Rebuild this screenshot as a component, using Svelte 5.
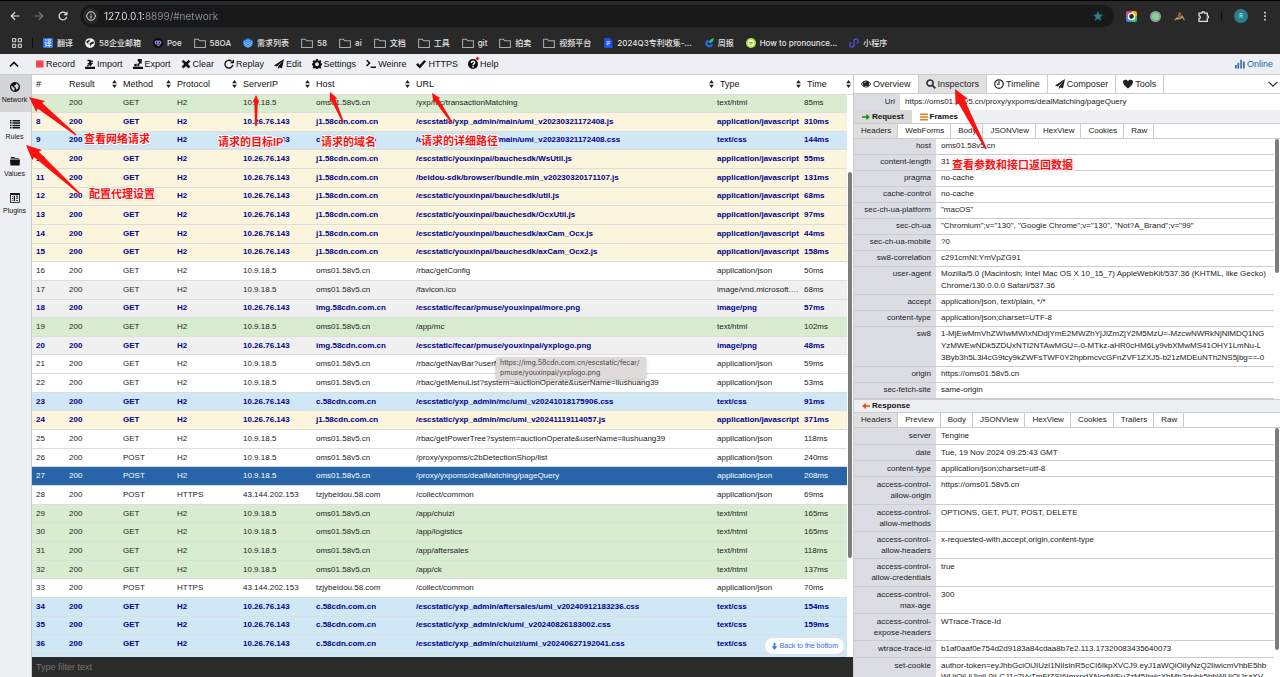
<script lang="ts">
  type Row = {
    id: number;
    method: string;
    protocol: string;
    ip: string;
    host: string;
    url: string;
    type: string;
    time: string;
  };

  const SHORT_TYPES: Record<string, string> = {
    html: "text/html",
    js: "application/javascript",
    css: "text/css",
    json: "application/json",
    png: "image/png",
    ico: "image/vnd.microsoft.icon",
  };

  const CDN = "10.26.76.143";
  const OMS = "10.9.18.5";

  // id | host | url | type | ms, the rest is derived from the host
  const source = `7|oms01.58v5.cn|/yxp/mc/transactionMatching|html|85
8|j1.58cdn.com.cn|/escstatic/yxp_admin/main/umi_v20230321172408.js|js|310
9|c.58cdn.com.cn|/escstatic/yxp_admin/main/umi_v20230321172408.css|css|144
10|j1.58cdn.com.cn|/escstatic/youxinpai/bauchesdk/WsUtil.js|js|55
11|j1.58cdn.com.cn|/beidou-sdk/browser/bundle.min_v20230320171107.js|js|131
12|j1.58cdn.com.cn|/escstatic/youxinpai/bauchesdk/util.js|js|68
13|j1.58cdn.com.cn|/escstatic/youxinpai/bauchesdk/OcxUtil.js|js|97
14|j1.58cdn.com.cn|/escstatic/youxinpai/bauchesdk/axCam_Ocx.js|js|44
15|j1.58cdn.com.cn|/escstatic/youxinpai/bauchesdk/axCam_Ocx2.js|js|158
16|oms01.58v5.cn|/rbac/getConfig|json|50
17|oms01.58v5.cn|/favicon.ico|ico|68
18|img.58cdn.com.cn|/escstatic/fecar/pmuse/youxinpai/more.png|png|57
19|oms01.58v5.cn|/app/mc|html|102
20|img.58cdn.com.cn|/escstatic/fecar/pmuse/youxinpai/yxplogo.png|png|48
21|oms01.58v5.cn|/rbac/getNavBar?userName=liushuang39|json|59
22|oms01.58v5.cn|/rbac/getMenuList?system=auctionOperate&userName=liushuang39|json|53
23|c.58cdn.com.cn|/escstatic/yxp_admin/mc/umi_v20241018175906.css|css|91
24|j1.58cdn.com.cn|/escstatic/yxp_admin/mc/umi_v20241119114057.js|js|371
25|oms01.58v5.cn|/rbac/getPowerTree?system=auctionOperate&userName=liushuang39|json|118
26|oms01.58v5.cn|/proxy/yxpoms/c2bDetectionShop/list|json|240
27|oms01.58v5.cn|/proxy/yxpoms/dealMatching/pageQuery|json|208
28|tzjybeidou.58.com|/collect/common|json|69
29|oms01.58v5.cn|/app/chuizi|html|165
30|oms01.58v5.cn|/app/logistics|html|165
31|oms01.58v5.cn|/app/aftersales|html|118
32|oms01.58v5.cn|/app/ck|html|137
33|tzjybeidou.58.com|/collect/common|json|70
34|c.58cdn.com.cn|/escstatic/yxp_admin/aftersales/umi_v20240912183236.css|css|154
35|c.58cdn.com.cn|/escstatic/yxp_admin/ck/umi_v20240826183002.css|css|159
36|c.58cdn.com.cn|/escstatic/yxp_admin/chuizi/umi_v20240627192041.css|css|129`;

  const rows = source.split("\n").map((line) => {
    const [id, host, url, kind, ms] = line.split("|");
    const beidou = host.startsWith("tzjy");
    const post = beidou || url.startsWith("/proxy");
    return {
      id: Number(id),
      kind,
      cached: host.includes("58cdn"),
      method: post ? "POST" : "GET",
      protocol: beidou ? "HTTPS" : "H2",
      ip: beidou ? "43.144.202.153" : host.includes("58cdn") ? CDN : OMS,
      host,
      url,
      type: SHORT_TYPES[kind],
      time: `${ms}ms`,
    } satisfies Row & { kind: string; cached: boolean };
  });

  let selected = $state(27);
  let filter = $state("");
  let address = $state("127.0.0.1:8899/#network");

  const columns = ["#", "Result", "Method", "Protocol", "ServerIP", "Host", "URL", "Type", "Time"];

  const actions = [
    ["record", "Record"],
    ["import", "Import"],
    ["export", "Export"],
    ["remove", "Clear"],
    ["repeat", "Replay"],
    ["send", "Edit"],
    ["cog", "Settings"],
    ["console", "Weinre"],
    ["ok", "HTTPS"],
    ["question", "Help"],
  ];

  const menu = [
    ["globe", "Network"],
    ["list", "Rules"],
    ["folder", "Values"],
    ["plugins", "Plugins"],
  ];

  const panes = [
    ["eye", "Overview"],
    ["search", "Inspectors"],
    ["time", "Timeline"],
    ["send", "Composer"],
    ["heart", "Tools"],
  ];

  const bookmarks = [
    ["translate", "翻译"],
    ["site", "58企业邮箱"],
    ["poe", "Poe"],
    ["dir", "58OA"],
    ["stack", "需求列表"],
    ["dir", "58"],
    ["dir", "ai"],
    ["dir", "文档"],
    ["dir", "工具"],
    ["dir", "git"],
    ["dir", "拍卖"],
    ["dir", "视频平台"],
    ["doc", "2024Q3专利收集-..."],
    ["weekly", "周报"],
    ["pron", "How to pronounce..."],
    ["mini", "小程序"],
  ];

  const requestTabs = ["Headers", "WebForms", "Body", "JSONView", "HexView", "Cookies", "Raw"];
  const responseTabs = ["Headers", "Preview", "Body", "JSONView", "HexView", "Cookies", "Trailers", "Raw"];

  const requestHeaders = [
    ["host", "oms01.58v5.cn"],
    ["content-length", "31"],
    ["pragma", "no-cache"],
    ["cache-control", "no-cache"],
    ["sec-ch-ua-platform", '"macOS"'],
    ["sec-ch-ua", '"Chromium";v="130", "Google Chrome";v="130", "Not?A_Brand";v="99"'],
    ["sec-ch-ua-mobile", "?0"],
    ["sw8-correlation", "c291cmNl:YmVpZG91"],
    [
      "user-agent",
      "Mozilla/5.0 (Macintosh; Intel Mac OS X 10_15_7) AppleWebKit/537.36 (KHTML, like Gecko)\nChrome/130.0.0.0 Safari/537.36",
    ],
    ["accept", "application/json, text/plain, */*"],
    ["content-type", "application/json;charset=UTF-8"],
    [
      "sw8",
      "1-MjEwMmVhZWIwMWIxNDdjYmE2MWZhYjJlZmZjY2M5MzU=-MzcwNWRkNjNlMDQ1NG\nYzMWEwNDk5ZDUxNTI2NTAwMGU=-0-MTkz-aHR0cHM6Ly9vbXMwMS41OHY1LmNu-L\n3Byb3h5L3l4cG9tcy9kZWFsTWF0Y2hpbmcvcGFnZVF1ZXJ5-b21zMDEuNTh2NS5jbg==-0",
    ],
    ["origin", "https://oms01.58v5.cn"],
    ["sec-fetch-site", "same-origin"],
  ];

  const responseHeaders = [
    ["server", "Tengine"],
    ["date", "Tue, 19 Nov 2024 09:25:43 GMT"],
    ["content-type", "application/json;charset=utf-8"],
    ["access-control-\nallow-origin", "https://oms01.58v5.cn"],
    ["access-control-\nallow-methods", "OPTIONS, GET, PUT, POST, DELETE"],
    ["access-control-\nallow-headers", "x-requested-with,accept,origin,content-type"],
    ["access-control-\nallow-credentials", "true"],
    ["access-control-\nmax-age", "300"],
    ["access-control-\nexpose-headers", "WTrace-Trace-Id"],
    ["wtrace-trace-id", "b1af0aaf0e754d2d9183a84cdaa8b7e2.113.17320083435640073"],
    [
      "set-cookie",
      "author-token=eyJhbGciOiJIUzI1NiIsInR5cCI6IkpXVCJ9.eyJ1aWQiOiIyNzQ2IiwicmVhbE5hb\nWUiOiLliJjniL0iLCJ1c2VyTmFtZSI6ImxpdXNodWFuZzM5IiwicXhMb2dpbk5hbWUiOiJsaXV",
    ],
  ];

  const notes = [
    { text: "查看网络请求", x: 84, y: 131, tip: [29, 97], tail: [76, 135], head: 10 },
    { text: "配置代理设置", x: 89, y: 186, tip: [26, 145], tail: [80, 194], head: 10 },
    { text: "请求的目标IP", x: 218, y: 134, tip: [256, 95], tail: [256, 126], head: 5 },
    { text: "请求的域名", x: 321, y: 134, tip: [330, 92], tail: [343, 122], head: 6 },
    { text: "请求的详细路径", x: 421, y: 133, tip: [432, 93], tail: [452, 123], head: 6 },
    { text: "查看参数和接口返回数据", x: 952, y: 157, tip: [955, 89], tail: [986, 149], head: 10 },
  ];

  // Tapered arrow: wide at the head, running to a point at the tail
  function arrow([tx, ty]: number[], [ex, ey]: number[], head: number) {
    const len = Math.hypot(ex - tx, ey - ty);
    const ux = (ex - tx) / len;
    const uy = (ey - ty) / len;
    const at = (along: number, side: number) =>
      `${(tx + ux * along - uy * side).toFixed(1)},${(ty + uy * along + ux * side).toFixed(1)}`;
    return [
      at(0, 0),
      at(head * 1.5, head * 0.7),
      at(head * 1.4, head * 0.36),
      at(len, 0.8),
      at(len, -0.8),
      at(head * 1.4, -head * 0.36),
      at(head * 1.5, -head * 0.7),
    ].join(" ");
  }
</script>

{#snippet icon(name: string)}
  <svg class="icon icon-{name}" viewBox="0 0 16 16" aria-hidden="true">
    {#if name === "record"}
      <path fill="#f5474f" d="M0 1h15v14H0z" />
    {:else if name === "import"}
      <path d="M0 12.500h16V16H0zM3 11.500l1.500-3 1.500 1V11.500zM4 1h4.500v1.500h4V5H9.800v1.500H13L8.300 11.500 3.500 6.500h3V3.500H4z" />
    {:else if name === "export"}
      <path d="M0 12.500h16V16H0zM2 11.500V8.500l4-1.500v4.500zM7 11.500V8.500l3-3L7.500 3V0H14v7h-2.500l-1.500 1.500v3z" />
    {:else if name === "remove"}
      <path d="M4 1l4 4 4-4 3 3-4 4 4 4-3 3-4-4-4 4-3-3 4-4-4-4z" />
    {:else if name === "repeat"}
      <path fill="none" stroke="currentColor" stroke-width="2.200" d="M14 9.500A6.200 6.200 0 1 1 12 3.600" />
      <path d="M9.500 6.800H16V.5z" />
    {:else if name === "send"}
      <path d="M16 0L0 10.500l4.500 1.300L13.500 3.500 6.200 12.500v3.500l2.600-2.500 4 1.200z" />
    {:else if name === "cog"}
      <path
        fill-rule="evenodd"
        d="M6.600 0h2.800l.5 2.200 1.400.6L13.200 1.600l1.900 1.900-1.200 1.900.6 1.400 1.500.3v2.700l-1.500.4-.6 1.400 1.200 1.900-1.900 1.900-1.900-1.200-1.400.6L9.400 16H6.600l-.5-1.200-1.400-.6-1.900 1.200L.9 13.500l1.200-1.900-.6-1.400L0 9.800V7.100l1.500-.3.600-1.400L.9 3.500l1.900-1.900 1.900 1.200 1.400-.6zM8 5.300a3 3 0 1 0 .01 0z"
      />
    {:else if name === "console"}
      <path d="M0 2.500l2-1.500 5.500 5.500L2 12 0 10.500 4 6.500zM7.500 12H16v2.500H7.500z" />
    {:else if name === "ok"}
      <path d="M0 9l2.800-2.500L6 9.500 13.200 1.500 16 4 6.200 15z" />
    {:else if name === "question"}
      <circle cx="8" cy="8" r="8" />
      <path fill="none" stroke="#fff" stroke-width="2.200" d="M5.300 6.300C5.500 2.600 10.800 3 10.600 6.200 10.500 8 8 7.800 8 10" />
      <path fill="#fff" d="M6.900 11.200h2.300v2.200H6.900z" />
    {:else if name === "globe"}
      <path
        fill-rule="evenodd"
        d="M8 0a8 8 0 1 0 .01 0zM9.500 2L13 4.500l1 3-2 3.500-2.200 1.500L9.500 9 7 7.500l.5-2.500 2.200-1zM3 5.500L5 8l2.500 2-.5 3.500-1 .4C3.500 12.500 2 10 2.200 7z"
      />
    {:else if name === "list"}
      <path d="M0 1.500h2.500V4H0zM4 1.500h12V4H4zM0 5.300h2.500v2.400H0zM4 5.300h12v2.400H4zM0 9h2.500v2.400H0zM4 9h12v2.400H4zM0 12.700h2.500V15H0zM4 12.700h12V15H4z" />
    {:else if name === "folder"}
      <path d="M1 4V3l1-1.500h5L8.500 3H14l1 1.500zM0 5.500h16L15.300 15H.7z" />
    {:else if name === "plugins"}
      <path fill="none" stroke="currentColor" stroke-width="1.300" d="M.8.8h14.400v14.400H.8z" />
      <path d="M.5.5h15V3H.5zM3 5h1.500v1.500H3zM3 8h1.500v1.500H3zM3 11h1.500v1.500H3zM6 4.500h2V13H6zM9.500 4.500H13V6H9.500zM9.500 7.500H13V9H9.500zM9.500 11H13v1.500H9.500z" />
    {:else if name === "eye"}
      <path
        fill-rule="evenodd"
        d="M8 2.500C4.500 2.500 1.800 5 0 8c1.800 3 4.500 5.500 8 5.500S14.200 11 16 8C14.200 5 11.500 2.500 8 2.500zM4.200 4.800a4.800 4.800 0 1 0 7.600 0c1.200.8 2 1.900 2.700 3.200C13 10.500 10.800 12 8 12S3 10.500 1.500 8c.7-1.300 1.500-2.400 2.700-3.200zM7.500 4a2.500 2.500 0 0 0-2.300 2.500H6.500A1.500 1.500 0 0 1 8 5z"
      />
    {:else if name === "search"}
      <path fill="none" stroke="currentColor" stroke-width="2.400" d="M6.500 1.500a4.900 4.900 0 1 0 .01 0z" />
      <path d="M9.500 11.200l1.700-1.700L16 14l-2 2z" />
    {:else if name === "time"}
      <circle cx="8" cy="8" r="6.800" fill="none" stroke="currentColor" stroke-width="2" />
      <path fill="none" stroke="currentColor" stroke-width="1.700" d="M8 3v5.500H4.500" />
    {:else if name === "heart"}
      <path d="M8 15C4 11.500 0 8.500 0 5 0 .8 5.500-.2 8 3.500 10.500-.2 16 .8 16 5c0 3.500-4 6.500-8 10z" />
    {:else if name === "stats"}
      <path d="M0 9.500h2.600V15H0zM4 6h2.600v9H4zM8.500 1H11v14H8.500zM12.800 4h2.600v11h-2.600z" />
    {:else if name === "up"}
      <path fill="none" stroke="currentColor" stroke-width="2.800" d="M1.500 12L8 5.500l6.500 6.500" />
    {:else if name === "down"}
      <path fill="none" stroke="currentColor" stroke-width="1.800" d="M1 4.500L8 11.500l7-7" />
    {:else if name === "right"}
      <path fill="#1b8a1b" d="M0 6.300h8.500V2L16 8l-7.500 6V9.700H0z" />
    {:else if name === "left"}
      <path fill="#f0420a" d="M16 6.300H7.500V2L0 8l7.500 6V9.700H16z" />
    {:else if name === "lines"}
      <path fill="#f27a1a" d="M0 1h16v3H0zM0 6.700h16v2.600H0zM0 12h16v3H0z" />
    {:else if name === "bottom"}
      <path d="M6 0h4v8h4.500L8 15.500 1.500 8H6z" />
    {:else if name === "back"}
      <path fill="none" stroke="#dfe1e4" stroke-width="1.900" d="M15 8H2M8 2L2 8l6 6" />
    {:else if name === "forward"}
      <path fill="none" stroke="#75777a" stroke-width="1.900" d="M1 8h13M8 2l6 6-6 6" />
    {:else if name === "reload"}
      <path fill="none" stroke="#dfe1e4" stroke-width="2" d="M14 9.500A6.200 6.200 0 1 1 12.500 3.800" />
      <path fill="#dfe1e4" d="M8.800 6.800h6.400V.5z" />
    {:else if name === "info"}
      <circle cx="8" cy="8" r="6.800" fill="none" stroke="#dfe1e4" stroke-width="1.600" />
      <path fill="#dfe1e4" d="M7.100 7h1.800v4.800H7.100zM7.100 4.200h1.800v1.700H7.100z" />
    {:else if name === "star"}
      <path fill="#2e7f8c" d="M8 0l2.300 5.400 5.700.5-4.300 3.800L13 15.500l-5-3-5 3 1.300-5.800L0 5.900l5.700-.5z" />
    {:else if name === "apps"}
      <path fill="none" stroke="#dfe1e4" stroke-width="1.600" d="M1 1h5v5H1zM10 1h5v5h-5zM1 10h5v5H1zM10 10h5v5h-5z" />
    {:else if name === "dir"}
      <path fill="none" stroke="#a9abae" stroke-width="1.400" d="M.8 14V3h5l1.700 2h7.700v9z" />
    {:else if name === "translate"}
      <rect width="16" height="16" rx="1.500" fill="#2a72f0" />
      <text x="8" y="12.500" font-size="12" text-anchor="middle" fill="#fff">译</text>
    {:else if name === "site"}
      <circle cx="8" cy="8" r="7.800" fill="#f1f1f1" />
      <path fill="#292929" d="M2 5.500l5-3 1 2.500-3 1.500 1 2.500-3-.5zM9 7l5-2v4l-3 .5-2.500 4.500L8 10l-2 .5z" />
    {:else if name === "poe"}
      <circle cx="8" cy="8" r="8" fill="#080808" />
      <rect x="2.500" y="4" width="11" height="6.500" rx="3" fill="#8f82d6" />
      <path stroke="#080808" stroke-width="1.500" d="M5.800 6v2.500M10.200 6v2.500" />
      <path fill="#d562a8" d="M6 11h6l-4 2.500z" />
    {:else if name === "stack"}
      <path fill="#2d7eea" d="M0 4.500L8 0l8 4.500-1 7.500-7 4-7-4z" />
      <path fill="none" stroke="#9fd0ff" stroke-width="1.200" d="M1 5.500l7 3.500 7-3.500M1 8.500L8 12l7-3.500M2 11.500l6 3 6-3M5 4l3 1.500L11 4" />
    {:else if name === "doc"}
      <path fill="#1b50f2" d="M2 0h9l4 4v12H2z" />
      <path fill="none" stroke="#fff" stroke-width="1.300" d="M5.500 6h6M5.500 8.500h6M5.500 11h3.500" />
    {:else if name === "weekly"}
      <path fill="none" stroke="#1e6ff5" stroke-width="3.500" d="M7.500 4.500a4.500 4.500 0 1 0 5.300 5.300" />
      <path fill="#22c4a0" d="M8 8c0-4 3-7 8-8-.5 5-3 8-8 8z" />
    {:else if name === "pron"}
      <circle cx="8" cy="8" r="8" fill="#b9e34a" />
      <circle cx="8" cy="8" r="5" fill="#f7ffe0" />
      <path fill="none" stroke="#6aa41a" stroke-width="1.500" d="M5 7h6M5.500 9.500h5" />
    {:else if name === "mini"}
      <path
        fill="none"
        stroke="#5a4df5"
        stroke-width="1.900"
        d="M4 7.500a3.500 3.500 0 1 0 4 3.500V5a3.500 3.500 0 1 1 4 3.500"
      />
    {:else if name === "camera"}
      <path fill="#e83e8c" d="M0 3a3 3 0 0 1 3-3h5v8H0z" />
      <path fill="#f7b500" d="M8 0h5a3 3 0 0 1 3 3v5H8z" />
      <path fill="#37c35f" d="M16 8v5a3 3 0 0 1-3 3H8V8z" />
      <path fill="#4a7df5" d="M0 8h8v8H3a3 3 0 0 1-3-3z" />
      <circle cx="8" cy="8" r="4.500" fill="#292929" stroke="#fff" stroke-width="2" />
    {:else if name === "dot"}
      <circle cx="8" cy="8" r="8" fill="#9a9a9a" />
      <circle cx="8" cy="8" r="5" fill="#7fd78a" />
    {:else if name === "rider"}
      <path fill="none" stroke="#a08472" stroke-width="2" d="M1 13.500l4-4 3 2 4-4 3 6M6 6l5 5" />
      <path fill="#c44931" d="M6 2h4l1 4-4 1z" />
      <path fill="#e0a21b" d="M3 10h4v2.500H3zM10 8h3v2h-3z" />
    {:else if name === "puzzle"}
      <path
        fill="none"
        stroke="#dfe1e4"
        stroke-width="1.900"
        d="M1.500 3h4c0-2.500 4-2.500 4 0h4v4c2.500 0 2.500 3.500 0 3.500V15h-12v-4c2.500 0 2.500-4 0-4z"
      />
    {:else if name === "more"}
      <path fill="#dfe1e4" d="M6.700 1h2.600v2.800H6.700zM6.700 6.600h2.600v2.800H6.700zM6.700 12.200h2.600V15H6.700z" />
    {/if}
  </svg>
{/snippet}

{#snippet headerTable(list: string[][], label: string)}
  <table class="props" aria-label={label}>
    <tbody>
      {#each list as [key, value]}
        <tr>
          <th scope="row">{key}</th>
          <td>{value}</td>
        </tr>
      {/each}
    </tbody>
  </table>
{/snippet}

<div class="window">
  <header class="browser">
    <div class="nav">
      <div class="history">
        <button aria-label="Back">{@render icon("back")}</button>
        <button aria-label="Forward">{@render icon("forward")}</button>
        <button aria-label="Reload">{@render icon("reload")}</button>
      </div>
      <div class="omnibox">
        <span class="site-info">{@render icon("info")}</span>
        <input aria-label="Address" bind:value={address} spellcheck="false" />
        {@render icon("star")}
      </div>
      <div class="extensions">
        <button aria-label="Capture">{@render icon("camera")}</button>
        <button aria-label="Status">{@render icon("dot")}</button>
        <button aria-label="Rider">{@render icon("rider")}</button>
        <button aria-label="Extensions">{@render icon("puzzle")}</button>
      </div>
      <span class="divider"></span>
      <button class="avatar" aria-label="Profile">R</button>
      <button aria-label="More">{@render icon("more")}</button>
    </div>
    <nav class="bookmarks">
      <button aria-label="Apps">{@render icon("apps")}</button>
      <span class="divider"></span>
      {#each bookmarks as [name, label]}
        <a href="#bookmark" class:dir={name === "dir"}>{@render icon(name)}{label}</a>
      {/each}
    </nav>
  </header>

  <div class="toolbar">
    <button class="collapse" aria-label="Collapse menu">{@render icon("up")}</button>
    {#each actions as [name, label]}
      <button class:record={name === "record"} class:notify={name === "question"}>{@render icon(name)}{label}</button>
    {/each}
    <button class="online">{@render icon("stats")}Online</button>
  </div>

  <main>
    <nav class="menu">
      {#each menu as [name, label], i}
        <a href="#{label.toLowerCase()}" class:active={i === 0}>{@render icon(name)}{label}</a>
      {/each}
    </nav>

    <section class="network">
      <table class="grid head">
        <thead>
          <tr>
            {#each columns as column, i}
              <th class="c{i}" scope="col">
                <div class="sortable">
                  {column}
                  {#if i > 0}
                    <svg class="sort" viewBox="0 0 6 10" aria-hidden="true"><path d="M0 4l3-4 3 4zM0 6h6l-3 4z" /></svg>
                  {/if}
                </div>
              </th>
            {/each}
          </tr>
        </thead>
      </table>
      <div class="list">
        <div class="list-rows">
          <table class="grid body" aria-label="Requests">
            <tbody>
              {#each rows as row (row.id)}
                <tr
                  class={row.kind}
                  class:cached={row.cached}
                  class:selected={row.id === selected}
                  onclick={() => (selected = row.id)}
                >
                  <td class="c0">{row.id}</td>
                  <td class="c1">200</td>
                  <td class="c2">{row.method}</td>
                  <td class="c3">{row.protocol}</td>
                  <td class="c4">{row.ip}</td>
                  <td class="c5">{row.host}</td>
                  <td class="c6">{row.url}</td>
                  <td class="c7">{row.type}</td>
                  <td class="c8">{row.time}</td>
                </tr>
              {/each}
            </tbody>
          </table>
        </div>
        <div class="track list-track"><span></span></div>
        <button class="to-bottom">{@render icon("bottom")}Back to the bottom</button>
      </div>
      <input class="filter" aria-label="Filter" placeholder="Type filter text" bind:value={filter} />
    </section>

    <section class="detail">
      <div class="panes">
        {#each panes as [name, label], i}
          <button class:active={i === 1}>{@render icon(name)}{label}</button>
        {/each}
        <button class="expand" aria-label="More panes">{@render icon("down")}</button>
      </div>
      <div class="url">
        <span>Url</span>
        <p>https://oms01.58v5.cn/proxy/yxpoms/dealMatching/pageQuery</p>
      </div>
      <div class="kinds">
        <button class="active">{@render icon("right")}Request</button>
        <button class="frames">{@render icon("lines")}Frames</button>
      </div>
      <div class="tabs">
        {#each requestTabs as tab, i}
          <button class:active={i === 0}>{tab}</button>
        {/each}
      </div>
      <div class="pane request">
        <div class="scroll">{@render headerTable(requestHeaders, "Request headers")}</div>
        <div class="track request-track"><span></span></div>
      </div>
      <div class="kinds response-kind">
        <button>{@render icon("left")}Response</button>
      </div>
      <div class="tabs">
        {#each responseTabs as tab, i}
          <button class:active={i === 0}>{tab}</button>
        {/each}
      </div>
      <div class="pane response">
        <div class="scroll">{@render headerTable(responseHeaders, "Response headers")}</div>
        <div class="track response-track"><span></span></div>
      </div>
    </section>
  </main>

  <div class="tooltip" role="tooltip">https://img.58cdn.com.cn/escstatic/fecar/<br />pmuse/youxinpai/yxplogo.png</div>

  <svg class="arrows" aria-hidden="true">
    {#each notes as note}
      <polygon points={arrow(note.tip, note.tail, note.head)} />
    {/each}
  </svg>
  {#each notes as note}
    <span class="note" style:left="{note.x}px" style:top="{note.y}px">{note.text}</span>
  {/each}
</div>

<style>
  :global(body) {
    margin: 0;
  }
  .window {
    position: relative;
    display: flex;
    flex-direction: column;
    height: 100vh;
    overflow: hidden;
    background: #fff;
    color: #222;
    font: 8px/12px "Liberation Sans", "Noto Sans CJK SC", sans-serif;
  }
  .window *,
  .window *::before {
    box-sizing: border-box;
  }
  button,
  input {
    margin: 0;
    padding: 0;
    border: 0;
    background: none;
    color: inherit;
    font: inherit;
  }
  a {
    color: inherit;
    text-decoration: none;
  }
  button,
  a {
    display: flex;
    align-items: center;
    white-space: nowrap;
  }
  table {
    border-collapse: collapse;
  }
  .icon {
    width: 10px;
    height: 10px;
    flex: none;
    fill: currentColor;
  }

  /* browser chrome */
  .browser {
    flex: none;
    height: 54px;
    border-top: 1px solid #000;
    background: #292929;
    color: #e3e3e3;
    font-family: Inter, "Noto Sans CJK SC", sans-serif;
  }
  .nav {
    display: flex;
    align-items: center;
    height: 30px;
    padding: 0 10px;
    gap: 12px;
  }
  .history {
    display: flex;
    gap: 14px;
  }
  .omnibox {
    display: flex;
    align-items: center;
    flex: 1;
    height: 22px;
    padding: 0 11px 0 3px;
    border-radius: 11px;
    background: #17191b;
  }
  .site-info {
    display: flex;
    align-items: center;
    justify-content: center;
    width: 16px;
    height: 16px;
    border-radius: 50%;
    background: #292929;
  }
  .omnibox input {
    flex: 1;
    padding-left: 5px;
    background: linear-gradient(to right, #e8eaed 45px, #8f9296 45px);
    background-clip: text;
    -webkit-text-fill-color: transparent;
    font-size: 10px;
  }
  .extensions {
    display: flex;
    gap: 13px;
  }
  .extensions .icon {
    width: 11px;
    height: 11px;
  }
  .divider {
    width: 1px;
    height: 10px;
    background: #0d0d0d;
  }
  .avatar {
    justify-content: center;
    width: 14px;
    height: 14px;
    border-radius: 50%;
    background: #25808f;
    font-size: 6px;
  }
  .bookmarks {
    display: flex;
    align-items: center;
    height: 24px;
    padding-left: 12px;
    gap: 12px;
    font-size: 8px;
    font-weight: 500;
  }
  .bookmarks .divider {
    margin: 0 -2px;
  }
  .bookmarks a {
    gap: 4px;
  }
  .bookmarks .dir .icon {
    width: 12px;
    height: 12px;
  }

  .toolbar {
    display: flex;
    flex: none;
    height: 21px;
    border-bottom: 1px solid #ccc;
    background: #eeeff2;
    color: #111;
    font-size: 9px;
  }
  .toolbar button {
    gap: 2px;
    padding: 0 5px;
  }
  .toolbar .collapse {
    width: 31px;
    padding-left: 9px;
  }
  .record .icon {
    width: 8px;
    height: 8px;
  }
  .toolbar .notify {
    position: relative;
  }
  .notify::after {
    content: "";
    position: absolute;
    top: 3px;
    left: 13px;
    width: 3px;
    height: 3px;
    border-radius: 50%;
    background: #f00;
  }
  .toolbar .online {
    margin-left: auto;
    padding-right: 7px;
    color: #2764a8;
  }

  main {
    display: flex;
    flex: 1;
    min-height: 0;
  }
  .menu {
    width: 32px;
    flex: none;
    border-right: 1px solid #ccc;
    background: #eeeff2;
    color: #111;
    font-size: 7px;
  }
  .menu a {
    flex-direction: column;
    justify-content: center;
    gap: 2px;
    height: 37px;
    padding-right: 2px;
  }
  .menu .active {
    background: #d4d5d7;
  }

  /* request list */
  .network {
    display: flex;
    flex-direction: column;
    flex: 1;
    min-width: 0;
  }
  .grid {
    width: 100%;
    table-layout: fixed;
  }
  .grid th,
  .grid td {
    overflow: hidden;
    padding: 0 0 0 4px;
    border-bottom: 1px solid #ddd;
    text-align: left;
    text-overflow: ellipsis;
    white-space: nowrap;
  }
  .grid th {
    height: 19px;
    font-weight: 400;
    font-size: 9px;
    color: #111;
  }
  .c0 {
    width: 33px;
  }
  .c1,
  .c2 {
    width: 54px;
  }
  .c3 {
    width: 66px;
  }
  .c4 {
    width: 73px;
  }
  .c5 {
    width: 100px;
  }
  .c7 {
    width: 87px;
  }
  .body .c8 {
    width: 47px;
  }
  .head .c8 {
    width: 50px;
  }
  .sortable {
    display: flex;
    align-items: center;
    justify-content: space-between;
    padding-right: 2px;
  }
  .sort {
    width: 5px;
    height: 8px;
    fill: #222;
  }
  .list {
    position: relative;
    display: flex;
    flex: 1;
    min-height: 0;
  }
  .list-rows {
    flex: 1;
    min-width: 0;
    background: #d0e7f5;
  }
  .grid.body {
    height: calc(100% - 3px);
    background: #fff;
  }
  .html {
    background: #d8edcf;
  }
  .js {
    background: #faf5dc;
  }
  .css {
    background: #d0e7f5;
  }
  .png,
  .ico {
    background: #f0f0f0;
  }
  .cached {
    color: #00008b;
    font-weight: 700;
  }
  .selected {
    background: #2764a8;
    color: #fff;
  }
  .track {
    flex: none;
    width: 6px;
    padding: 0 1px;
  }
  .track span {
    display: block;
    border-radius: 2px;
    background: #7c7c7c;
  }
  .list-track {
    padding-top: 77px;
  }
  .list-track span {
    height: 386px;
  }
  .to-bottom {
    position: absolute;
    right: 9px;
    bottom: 3px;
    height: 16px;
    padding: 0 6px;
    gap: 2px;
    border-radius: 8px;
    background: rgba(255, 255, 255, 0.9);
    color: #3a6ee8;
    font-size: 7px;
  }
  .to-bottom .icon {
    width: 7px;
    height: 7px;
  }
  .filter {
    flex: none;
    height: 20px;
    padding: 0 4px;
    background: #2b2b2b;
    color: #ddd;
    font-size: 9px;
  }
  .filter::placeholder {
    color: #757575;
  }

  /* inspectors */
  .detail {
    display: flex;
    flex-direction: column;
    width: 427px;
    flex: none;
    border-left: 1px solid #ccc;
  }
  .panes {
    display: flex;
    flex: none;
    height: 19px;
    border-bottom: 1px solid #ccc;
    font-size: 9px;
  }
  .panes button {
    gap: 2px;
    padding: 0 7px;
    border-right: 1px solid #ccc;
  }
  .panes .active,
  .tabs .active {
    background: #e0e0e0;
  }
  .panes .expand {
    margin-left: auto;
    padding: 0 2px;
    border: 0;
  }
  .url {
    display: flex;
    flex: none;
    height: 16px;
    line-height: 16px;
  }
  .url span {
    width: 46px;
    padding-right: 5px;
    background: #dcdde2;
    text-align: right;
  }
  .url p {
    margin: 0;
    padding-left: 5px;
  }
  .kinds {
    display: flex;
    flex: none;
    height: 14px;
    border-bottom: 1px solid #ccc;
    background: #eeeff2;
    color: #111;
    font-weight: 700;
  }
  .kinds button {
    gap: 2px;
    padding: 0 8px;
  }
  .kinds .icon {
    width: 8px;
    height: 8px;
  }
  .kinds .active {
    background: #dadada;
  }
  .kinds .frames {
    background: #fff;
  }
  .response-kind {
    border-top: 1px solid #ccc;
  }
  .tabs {
    display: flex;
    flex: none;
    height: 15px;
    border-bottom: 1px solid #ccc;
  }
  .tabs button {
    padding: 0 6px 0 7px;
    border-right: 1px solid #ccc;
  }
  .pane {
    display: flex;
    min-height: 0;
    overflow: hidden;
  }
  .request {
    flex: 261;
  }
  .response {
    flex: 249;
  }
  .scroll {
    flex: 1;
    min-width: 0;
    overflow: hidden;
    background: linear-gradient(to right, #dcdde2 82px, #fff 82px);
  }
  .props {
    width: 100%;
    table-layout: fixed;
  }
  .props th,
  .props td {
    padding: 1px 5px 2px;
    border-bottom: 1px solid #ccc;
    vertical-align: top;
    text-align: left;
    font-weight: 400;
    white-space: pre;
  }
  .props th {
    width: 82px;
    text-align: right;
    background: #dcdde2;
  }
  .response .props {
    height: calc(100% + 8px);
    line-height: 11px;
  }
  .response .props th,
  .response .props td {
    padding: 2px 5px;
  }
  .request-track span {
    height: 134px;
  }
  .response-track span {
    height: 222px;
  }

  /* things lying over the page */
  .tooltip {
    position: absolute;
    left: 496px;
    top: 357px;
    padding: 1px 7px 1px 4px;
    border-radius: 2px;
    background: #dfdada;
    box-shadow: 0 1px 3px rgba(0, 0, 0, 0.3);
    color: #444;
    font: 7px/10px Inter, sans-serif;
    white-space: nowrap;
  }
  .arrows {
    position: absolute;
    inset: 0;
    width: 100%;
    height: 100%;
    fill: #fd1010;
    pointer-events: none;
  }
  .note {
    position: absolute;
    color: #fd1010;
    font: 700 11px/16px "Liberation Sans", "Noto Sans CJK SC", sans-serif;
    white-space: nowrap;
    text-shadow:
      1px 0 #fff,
      -1px 0 #fff,
      0 1px #fff,
      0 -1px #fff,
      1px 1px #fff,
      -1px -1px #fff,
      1px -1px #fff,
      -1px 1px #fff,
      0 0 3px #888;
  }
</style>
